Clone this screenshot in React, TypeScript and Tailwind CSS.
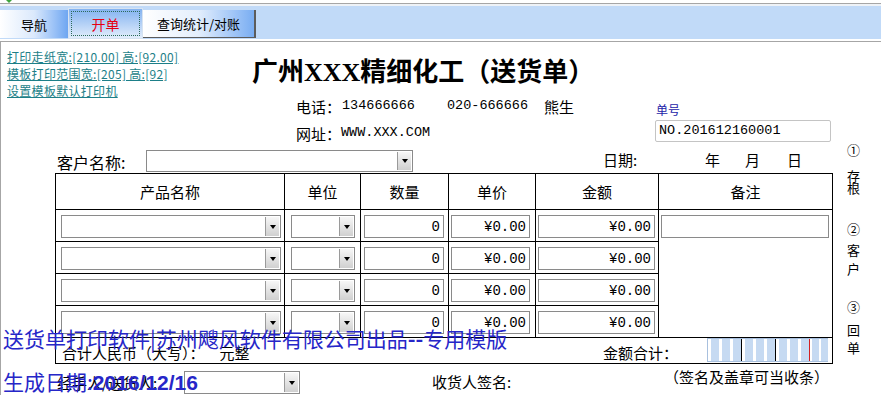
import React from 'react';

const mono = "font-['Liberation_Mono',monospace]";

function Combo({ className }: { className: string }) {
  return (
    <div className={`flex bg-white border border-[#8a8a8a] ${className}`}>
      <div className="flex-1" />
      <div className="w-[14px] my-px mr-px border-l border-[#9a9a9a] bg-linear-to-b from-[#f7f7f7] to-[#d0d0d0] flex items-center justify-center">
        <div className="w-0 h-0 border-x-[3.5px] border-t-[4px] border-x-transparent border-t-black" />
      </div>
    </div>
  );
}

function Field({ className, value }: { className: string; value?: string }) {
  return (
    <div className={`flex items-center justify-end pr-[3px] bg-white border border-[#8a8a8a] text-[14px] leading-none ${mono} ${className}`}>
      {value}
    </div>
  );
}

function BodyRow({ last }: { last?: boolean }) {
  return (
    <div className={`flex ${last ? 'h-[31px]' : 'h-[32px] border-b border-black'}`}>
      <div className="w-[229px] border-r border-black pl-[5px] pt-[5px]">
        <Combo className="w-[220px] h-[23px]" />
      </div>
      <div className="w-[76px] border-r border-black pl-[6px] pt-[5px]">
        <Combo className="w-[64px] h-[23px]" />
      </div>
      <div className="w-[88px] border-r border-black pl-[3px] pt-[5px]">
        <Field className="w-[80px] h-[23px]" value="0" />
      </div>
      <div className="w-[87px] border-r border-black pl-[2px] pt-[5px]">
        <Field className="w-[79px] h-[23px]" value="¥0.00" />
      </div>
      <div className="w-[123px] border-r border-black pl-[2px] pt-[5px]">
        <Field className="w-[117px] h-[23px]" value="¥0.00" />
      </div>
    </div>
  );
}

function Cells({ n, narrow }: { n: number; narrow?: boolean }) {
  return (
    <div className="flex h-full">
      {Array.from({ length: n }).map((_, i) => (
        <div key={i} className={narrow ? 'h-full w-[7px] ml-[2px] bg-[#c6daf2]' : 'h-full w-[8px] ml-[3px] bg-[#c6daf2]'} />
      ))}
    </div>
  );
}

export default function App() {
  const headers = [
    { label: '产品名称', w: 'w-[229px] border-r' },
    { label: '单位', w: 'w-[76px] border-r' },
    { label: '数量', w: 'w-[88px] border-r' },
    { label: '单价', w: 'w-[87px] border-r' },
    { label: '金额', w: 'w-[123px] border-r' },
    { label: '备注', w: 'w-[173px]' },
  ];

  return (
    <div className="w-[881px] h-[395px] overflow-hidden bg-white text-black font-['Noto_Sans_CJK_SC',sans-serif] flex flex-col">
      {/* 顶部细条 */}
      <div className="relative h-[3px] bg-white shrink-0">
        <div className="absolute left-[6px] top-0 w-0 h-0 border-x-[3px] border-t-[3px] border-x-transparent border-t-[#3da43d]" />
      </div>
      <div className="h-px bg-[#a6a6a6] shrink-0" />
      <div className="h-[2px] bg-[#eef2f7] shrink-0" />

      {/* 标签栏 */}
      <div className="h-[33px] bg-[#c1daf8] flex items-end shrink-0">
        <div className="w-[68px] h-[28px] mb-px bg-linear-to-r from-white via-[#dbe9fc] to-[#6ea6f1] flex items-center justify-center text-[13px] leading-none">
          导航
        </div>
        <div className="relative w-[75px] h-[31px] border border-[#d7e3f1] bg-linear-to-b from-[#84b3f0] to-[#e2edfb] flex items-center justify-center text-[14px] leading-none text-[#e60012]">
          <div className="absolute inset-[2px] border border-dotted border-[#2d6b5a]" />
          开单
        </div>
        <div className="w-[113px] h-[28px] mb-px bg-linear-to-r from-white via-[#e3eefc] to-[#79adf2] border-r-2 border-b border-[#5c5c5c] flex items-center justify-center text-[13px] leading-none">
          查询统计/对账
        </div>
      </div>
      <div className="h-[2px] bg-white shrink-0" />
      <div className="h-px bg-[#a6a6a6] shrink-0" />

      {/* 单据内容 */}
      <div className="relative flex-1 flex border-l border-[#a6a6a6]">
        <div className="w-[844px] flex flex-col">
          {/* 抬头 */}
          <div className="h-[108px] flex">
            <div className="w-[251px] pl-[6px] pt-[6px] text-[12px] leading-[17px] tracking-[0.3px] text-[#1d7f88] underline whitespace-nowrap">
              <div>打印走纸宽:[210.00] 高:[92.00]</div>
              <div>模板打印范围宽:[205] 高:[92]</div>
              <div>设置模板默认打印机</div>
            </div>
            <div className="w-[403px] pt-[11px]">
              <div className="text-[26px] leading-[34px] font-bold whitespace-nowrap">
                广州<span className="font-['Liberation_Serif',serif]">XXX</span>精细化工（送货单）
              </div>
              <div className="mt-[6px] ml-[44px] flex items-center h-[20px] text-[15px] leading-none whitespace-nowrap">
                <span className="w-[46px]">电话：</span>
                <span className={`w-[105px] text-[13.5px] ${mono}`}>134666666</span>
                <span className={`w-[97px] text-[13.5px] ${mono}`}>020-666666</span>
                <span>熊生</span>
              </div>
              <div className="mt-[7px] ml-[44px] flex items-center h-[20px] text-[15px] leading-none whitespace-nowrap">
                <span className="w-[45px]">网址：</span>
                <span className={`text-[13.5px] ${mono}`}>WWW.XXX.COM</span>
              </div>
            </div>
            <div className="pt-[61px]">
              <div className="ml-px text-[12px] leading-[14px] text-[#1c1ca8]">单号</div>
              <div className={`mt-[3px] w-[176px] h-[22px] border border-[#c4c4c4] rounded-[2px] pl-[3px] flex items-center text-[13.5px] leading-none ${mono}`}>
                NO.201612160001
              </div>
            </div>
          </div>

          {/* 客户 / 日期 */}
          <div className="h-[23px] flex items-start">
            <div className="w-[145px] pl-[56px] text-[16px] leading-[24px]">客户名称:</div>
            <Combo className="w-[267px] h-[22px]" />
            <div className="ml-[190px] flex text-[15px] leading-[20px]">
              <span className="w-[102px]">日期:</span>
              <span className="w-[40px]">年</span>
              <span className="w-[42px]">月</span>
              <span>日</span>
            </div>
          </div>

          {/* 明细表 */}
          <div className="ml-[54px] w-[778px] border border-black">
            <div className="flex h-[36px] border-b border-black">
              {headers.map((h) => (
                <div key={h.label} className={`${h.w} border-black flex items-center justify-center text-[15px] leading-none`}>
                  {h.label}
                </div>
              ))}
            </div>
            <div className="flex border-b border-black">
              <div className="flex flex-col">
                <BodyRow />
                <BodyRow />
                <BodyRow />
                <BodyRow last />
              </div>
              <div className="w-[173px] pl-[2px] pt-[5px]">
                <Field className="w-[168px] h-[23px]" />
              </div>
            </div>
            <div className="flex h-[25px]">
              <div className="w-[547px] pl-[6px] flex items-center text-[15px] leading-none pt-[3px]">
                <span>合计人民币（大写）：</span>
                <span className="ml-[15px]">元整</span>
              </div>
              <div className="w-[104px] flex items-center text-[15px] leading-none pt-[3px]">金额合计：</div>
              <div className="flex h-[24px] w-[121px] border border-[#a8c0de] bg-white">
                <div className="border-r border-black"><Cells n={3} /></div>
                <div className="border-r border-black"><Cells n={3} /></div>
                <div className="border-r border-[#d42020]"><Cells n={3} /></div>
                <Cells n={2} narrow />
              </div>
            </div>
          </div>

          {/* 签名行 */}
          <div className="mt-[7px] h-[23px] flex items-start">
            <div className="w-[183px] pl-[56px] text-[15px] leading-[23px]">经手人/送货人:</div>
            <Combo className="w-[116px] h-[23px]" />
            <div className="ml-[132px] w-[232px] text-[15px] leading-[22px]">收货人签名:</div>
            <div className="-mt-[3px] text-[15px] leading-[18px] whitespace-nowrap">（签名及盖章可当收条）</div>
          </div>
        </div>

        {/* 右侧联次 */}
        <div className="pt-[102px] pl-[2px] text-[13px] leading-[12px] flex flex-col">
          <span>①</span>
          <span className="mt-[14px]">存</span>
          <span>根</span>
          <span className="mt-[29px]">②</span>
          <span className="mt-[9px]">客</span>
          <span className="mt-[7px]">户</span>
          <span className="mt-[26px]">③</span>
          <span className="mt-[11px]">回</span>
          <span className="mt-[6px]">单</span>
        </div>

        {/* 浮在模板上的水印文字 */}
        <div className="absolute left-[2px] top-[283px] text-[21px] leading-[26px] text-[#2626c8] whitespace-nowrap">
          送货单打印软件|苏州飕风软件有限公司出品<span className="font-bold">--</span>专用模版
        </div>
        <div className="absolute left-[2px] top-[326px] text-[21px] leading-[26px] text-[#2626c8] whitespace-nowrap">
          生成日期:<span className="font-['Liberation_Sans',sans-serif] font-bold">2016/12/16</span>
        </div>
      </div>
    </div>
  );
}
